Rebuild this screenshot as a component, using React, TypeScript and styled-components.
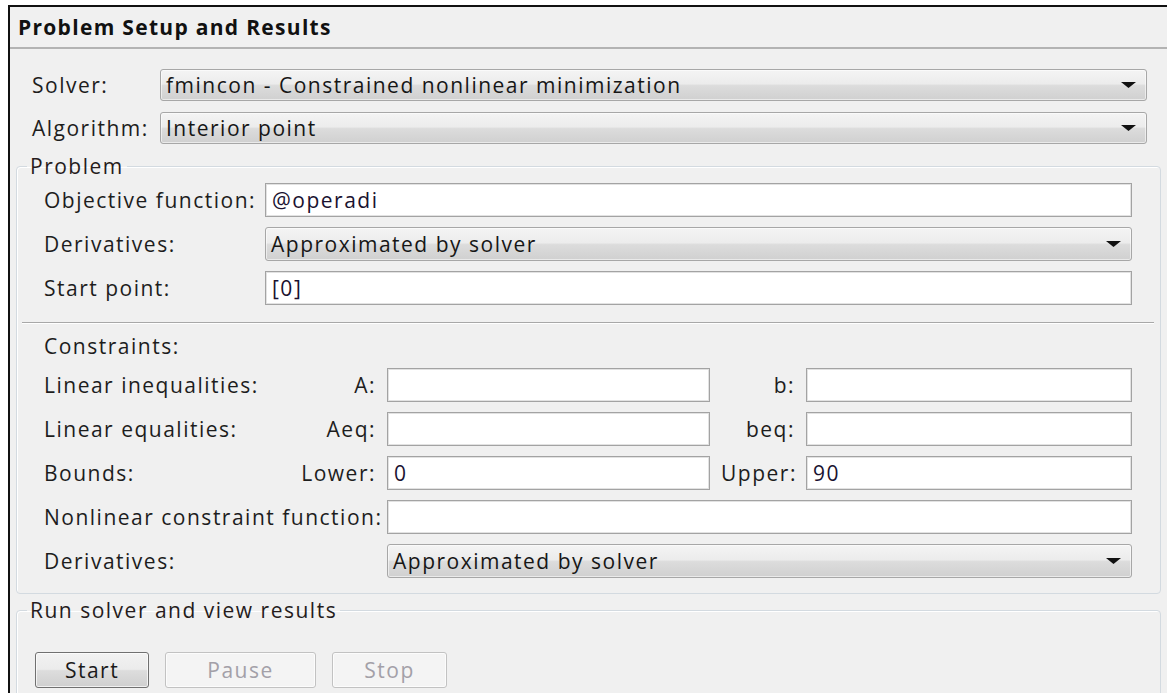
import React from "react";
import styled, { createGlobalStyle } from "styled-components";

const GlobalStyle = createGlobalStyle`
  html, body {
    margin: 0;
    padding: 0;
    background: #fff;
  }
  body {
    font-family: "Open Sans", "Noto Sans", sans-serif;
    overflow: hidden;
  }
`;

const Frame = styled.div`
  margin: 5px 0 0 8px;
  border-top: 2px solid #111;
  border-left: 2px solid #111;
  background: #f0f0f0;
  height: 720px;
  color: #1d1d1d;
  font-size: 21px;
  letter-spacing: 1.5px;
`;

const TitleBar = styled.div`
  height: 40px;
  display: flex;
  align-items: center;
  padding-left: 8px;
  font-weight: 700;
  font-size: 21px;
  letter-spacing: 1.3px;
  color: #111;
  border-bottom: 2px solid #b3b3b3;
`;

const SolverGrid = styled.div`
  display: grid;
  grid-template-columns: 128px 1fr;
  row-gap: 11px;
  align-items: center;
  padding: 20px 20px 0 22px;
`;

const Label = styled.span<{ $align?: "left" | "right" }>`
  white-space: nowrap;
  text-align: ${({ $align }) => $align || "left"};
`;

const Group = styled.fieldset`
  margin: 0 6px;
  padding: 0;
  border: 1px solid #d3dae0;
  border-radius: 4px;
  box-shadow: inset 1px 1px 0 #fff;
  min-width: 0;

  & + & {
    margin-top: 2px;
  }
`;

const ProblemGroup = styled(Group)`
  margin-top: 8px;
`;

const Legend = styled.legend`
  margin-left: 10px;
  padding: 0 3px;
  line-height: 28px;
  color: #261c1c;
`;

const GroupBody = styled.div`
  padding: 0 28px 15px 27px;
`;

const FieldGrid = styled.div`
  display: grid;
  grid-template-columns: 221px 1fr;
  row-gap: 10px;
  align-items: center;
  padding-top: 3px;
`;

const Divider = styled.hr`
  margin: 17px -22px 0 -22px;
  border: 0;
  border-top: 1px solid #a8a8a8;
  border-bottom: 1px solid #fff;
`;

const SubHeading = styled.div`
  height: 44px;
  display: flex;
  align-items: center;
`;

const ConstraintGrid = styled.div`
  display: grid;
  grid-template-columns: 332px 323px 74px 1fr;
  column-gap: 11px;
  row-gap: 10px;
  align-items: center;
  grid-auto-rows: 34px;
`;

const LabelPair = styled.div`
  display: flex;
  justify-content: space-between;
  white-space: nowrap;
`;

const Wide = styled.div`
  grid-column: 2 / 5;
`;

const Input = styled.div`
  box-sizing: border-box;
  height: 34px;
  background: #fff;
  border: 1px solid #a3a3a3;
  box-shadow: inset 0 0 0 1px #e2e2e2;
  display: flex;
  align-items: center;
  padding: 0 6px;
  color: #1a1230;
  white-space: nowrap;
`;

const Select = styled.div<{ $h?: number }>`
  box-sizing: border-box;
  height: ${({ $h }) => $h || 34}px;
  border: 1px solid #a7a7a7;
  border-radius: 3px;
  background: linear-gradient(#f4f4f4 0%, #ececec 46%, #dcdcdc 52%, #d0d0d0 100%);
  box-shadow: inset 0 0 0 1px rgba(255, 255, 255, 0.55);
  display: flex;
  align-items: center;
  justify-content: space-between;
  padding: 0 10px 0 5px;
  white-space: nowrap;
  color: #161616;
`;

const ButtonRow = styled.div`
  display: flex;
  gap: 16px;
  padding: 28px 0 0 18px;
  height: 60px;
`;

const Button = styled.button<{ $w: number; $disabled?: boolean }>`
  box-sizing: border-box;
  width: ${({ $w }) => $w}px;
  height: 36px;
  font: inherit;
  letter-spacing: inherit;
  border-radius: 3px;
  border: 1px solid ${({ $disabled }) => ($disabled ? "#c2c2c2" : "#707070")};
  background: ${({ $disabled }) =>
    $disabled ? "#f4f4f4" : "linear-gradient(#f2f2f2 0%, #ebebeb 48%, #dddddd 52%, #cfcfcf 100%)"};
  color: ${({ $disabled }) => ($disabled ? "#a3a0a8" : "#1a1a1a")};
  box-shadow: inset 0 0 0 1px rgba(255, 255, 255, 0.7);
  padding: 0;
`;

const Arrow = () => (
  <svg width="15" height="6" viewBox="0 0 15 6">
    <polygon points="0,0 15,0 7.5,6" fill="#111" />
  </svg>
);

const Dropdown = ({ value, h }: { value: string; h?: number }) => (
  <Select $h={h}>
    <span>{value}</span>
    <Arrow />
  </Select>
);

const App = () => {
  return (
    <>
      <GlobalStyle />
      <Frame>
        <TitleBar>Problem Setup and Results</TitleBar>

        <SolverGrid>
          <Label>Solver:</Label>
          <Dropdown h={32} value="fmincon - Constrained nonlinear minimization" />
          <Label>Algorithm:</Label>
          <Dropdown h={32} value="Interior point" />
        </SolverGrid>

        <ProblemGroup>
          <Legend>Problem</Legend>
          <GroupBody>
            <FieldGrid>
              <Label>Objective function:</Label>
              <Input>@operadi</Input>
              <Label>Derivatives:</Label>
              <Dropdown value="Approximated by solver" />
              <Label>Start point:</Label>
              <Input>[0]</Input>
            </FieldGrid>

            <Divider />
            <SubHeading>Constraints:</SubHeading>

            <ConstraintGrid>
              <LabelPair>
                <span>Linear inequalities:</span>
                <span>A:</span>
              </LabelPair>
              <Input />
              <Label $align="right">b:</Label>
              <Input />

              <LabelPair>
                <span>Linear equalities:</span>
                <span>Aeq:</span>
              </LabelPair>
              <Input />
              <Label $align="right">beq:</Label>
              <Input />

              <LabelPair>
                <span>Bounds:</span>
                <span>Lower:</span>
              </LabelPair>
              <Input>0</Input>
              <Label $align="right">Upper:</Label>
              <Input>90</Input>

              <Label>Nonlinear constraint function:</Label>
              <Wide>
                <Input />
              </Wide>

              <Label>Derivatives:</Label>
              <Wide>
                <Dropdown value="Approximated by solver" />
              </Wide>
            </ConstraintGrid>
          </GroupBody>
        </ProblemGroup>

        <Group>
          <Legend>Run solver and view results</Legend>
          <ButtonRow>
            <Button $w={114}>Start</Button>
            <Button $w={151} $disabled>
              Pause
            </Button>
            <Button $w={115} $disabled>
              Stop
            </Button>
          </ButtonRow>
        </Group>
      </Frame>
    </>
  );
};

export default App;
